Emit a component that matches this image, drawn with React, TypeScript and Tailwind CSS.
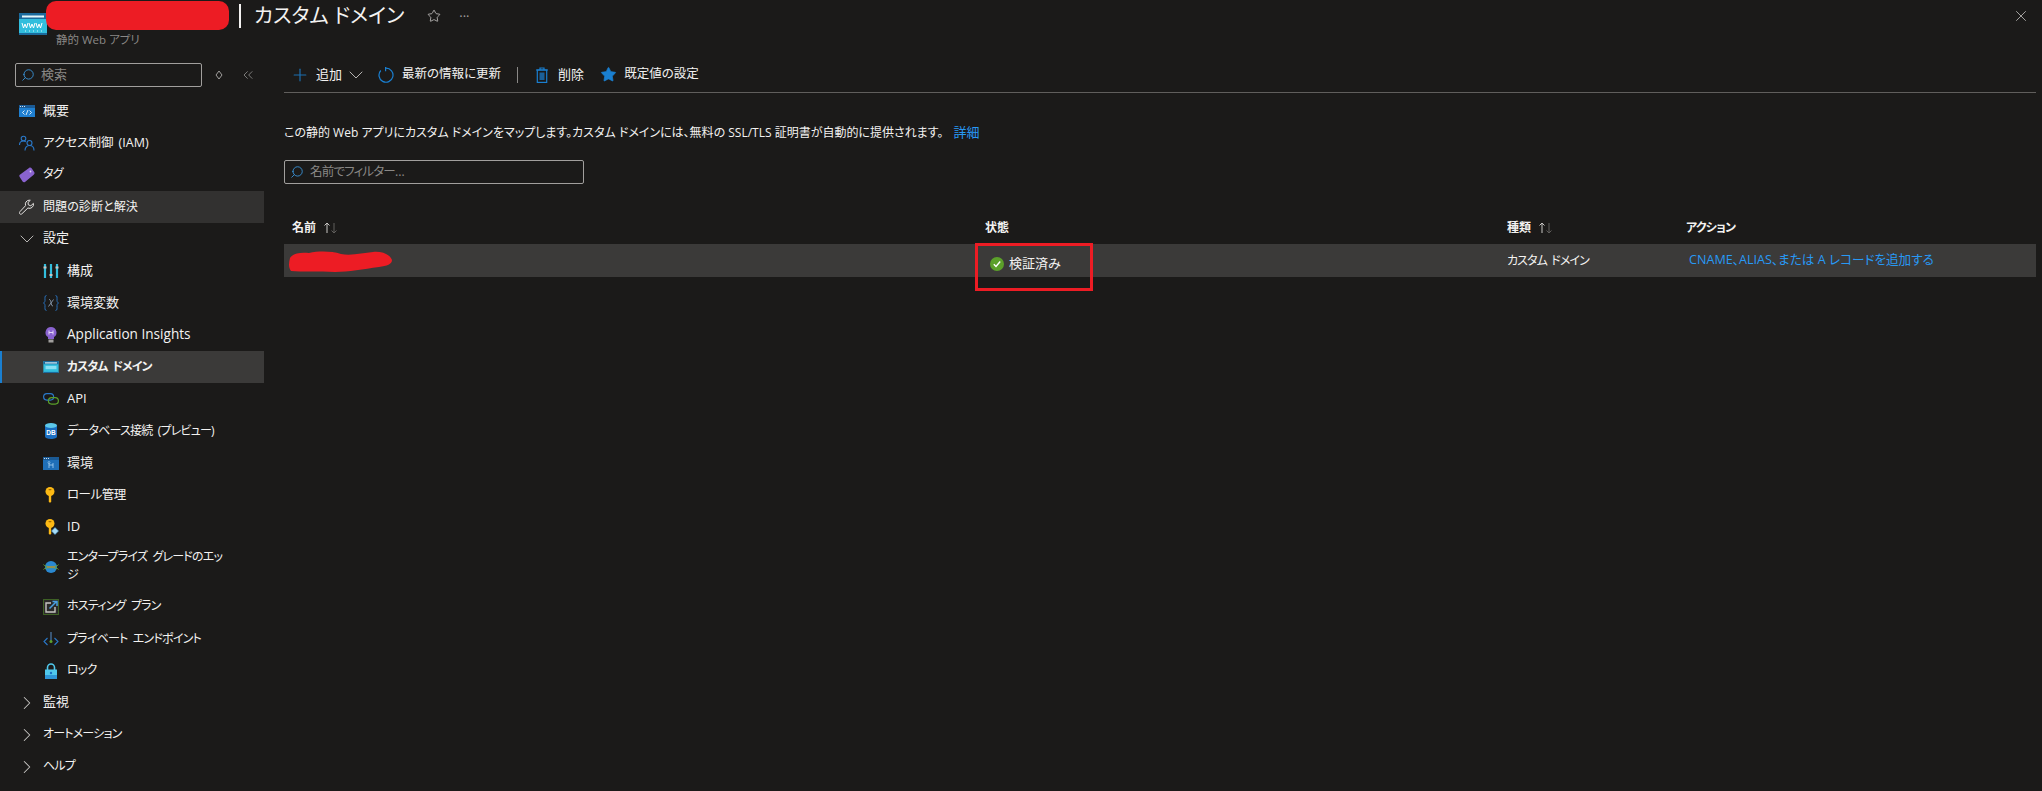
import { ReactNode } from "react";
import { ChevronDown, ChevronRight, ChevronsLeft, Plus, Search, Star, X } from "lucide-react";

const fontClass =
  "[font-family:'Open_Sans','Noto_Sans_CJK_JP',sans-serif] [font-feature-settings:'palt']";

// the katakana in the portal runs much narrower than Noto's
const kana = "text-[12px] tracking-[-0.8px] [word-spacing:3px]";

const WwwIcon = ({ small }: { small?: boolean }) => (
  <svg viewBox="0 0 28 22" className={small ? "w-4 h-3" : "w-7 h-[22px]"}>
    <rect width="28" height="22" fill="#32bedd" />
    <rect width="28" height="6" fill="#1b6a9c" />
    <rect x="3" y="2.500" width="22" height="2" fill="#e6f6fb" />
    <rect y="20" width="28" height="2" fill="#1b6a9c" />
    {!small && (
      <>
        <path d="M3 10l1.500 5 1.500-4 1.500 4 1.500-5M10 10l1.500 5 1.500-4 1.500 4 1.500-5M17 10l1.500 5 1.500-4 1.500 4 1.500-5" fill="none" stroke="#fff" strokeWidth="1" />
        <path d="M6 18h1M10 18h1M14 18h1M18 18h1M22 18h1" stroke="#d8f4fa" strokeWidth="1" />
      </>
    )}
    {small && <rect x="4" y="9" width="20" height="6" fill="#8be0f2" />}
  </svg>
);

const OverviewIcon = () => (
  <svg viewBox="0 0 16 12" className="w-4 h-3">
    <rect width="16" height="12" fill="#1f7fd0" />
    <rect width="16" height="3" fill="#1b5a94" />
    <path d="M1 1.500h1M3 1.500h1M5 1.500h1" stroke="#fff" strokeWidth="0.800" />
    <path d="M5.500 5.500L3.500 7.500l2 2M10.500 5.500l2 2-2 2M9 5l-2 5" fill="none" stroke="#fff" strokeWidth="0.800" />
  </svg>
);

const PeopleIcon = () => (
  <svg viewBox="0 0 16 16" className="w-4 h-4" fill="none" stroke="#2a78c8" strokeWidth="1.100">
    <circle cx="4.500" cy="3.500" r="2.300" />
    <path d="M0.500 10c0-2.500 1.500-4 4-4 1 0 1.600.2 2.300.7" />
    <circle cx="10.500" cy="8" r="2.500" />
    <path d="M6 15.500c0-3 1.800-5 4.500-5s4.500 2 4.500 5" />
  </svg>
);

const TagIcon = () => (
  <svg viewBox="0 0 16 16" className="w-4 h-4">
    <path d="M0.500 8L10 1c1-.7 2-.5 2.600.3l2.600 3.800c.6.900.4 2-.5 2.600L6 15c-1 .5-1.800.3-2.400-.4L0.700 10c-.5-.7-.5-1.400-.2-2z" fill="#8a63cf" />
    <circle cx="11.500" cy="4.500" r="0.900" fill="#e3d8f6" />
  </svg>
);

const WrenchIcon = () => (
  <svg viewBox="0 0 16 16" className="w-4 h-4" fill="none" stroke="#e6e4e2" strokeWidth="1">
    <path d="M10 1.200a4 4 0 0 0-3.400 5.400L1 12.600c-.8.800-.8 1.600-.2 2.200s1.500.6 2.200-.1L8.900 9a4 4 0 0 0 5.500-4.600L11.800 6.800 9.300 5.800 9 3.500 11.300 1.300A4 4 0 0 0 10 1.200z" />
  </svg>
);

const SlidersIcon = () => (
  <svg viewBox="0 0 16 16" className="w-4 h-4">
    <path d="M2 1v14M8 1v14M14 1v14" stroke="#32bedd" strokeWidth="2.200" />
    <rect x="0.500" y="3.500" width="3" height="2" fill="#c8c6c4" />
    <rect x="6.500" y="11" width="3" height="2" fill="#c8c6c4" />
    <rect x="12.500" y="3.500" width="3" height="2" fill="#c8c6c4" />
  </svg>
);

const VariableIcon = () => (
  <svg viewBox="0 0 16 16" className="w-4 h-4" fill="none" stroke="#2a78c8" strokeWidth="0.900">
    <path d="M3.500 0.500C1.500 0.500 2 3 2 5.500c0 1.500-1 2.500-1.500 2.500C1 8 2 9 2 10.500c0 2.500-.5 5 1.500 5M12.500 0.500c2 0 1.500 2.500 1.500 5 0 1.500 1 2.500 1.500 2.500-.5 0-1.500 1-1.500 2.500 0 2.500.5 5-1.500 5" />
    <path d="M6 4.500c1.500 0 1.500 1 2 3s.5 3.500 2 3.500M10.500 4.500L5.500 11.500" stroke="#8a9bb0" />
  </svg>
);

const BulbIcon = () => (
  <svg viewBox="0 0 16 16" className="w-4 h-4">
    <path d="M8 0a5.500 5.500 0 0 0-3 10.100V12h6v-1.900A5.500 5.500 0 0 0 8 0z" fill="#8a63cf" />
    <rect x="5.500" y="12.500" width="5" height="3" fill="#a19f9d" />
    <path d="M6 3.500v4M10 3.500v4M6 5.500h4" stroke="#e3d8f6" strokeWidth="1" />
  </svg>
);

const LinkIcon = () => (
  <svg viewBox="0 0 16 12" className="w-4 h-3" fill="none" strokeWidth="1.200">
    <rect x="0.600" y="0.600" width="10" height="6.500" rx="3.250" stroke="#2a78c8" />
    <rect x="5.400" y="4.600" width="10" height="6.500" rx="3.250" stroke="#5ba02a" />
  </svg>
);

const DbIcon = () => (
  <svg viewBox="0 0 16 16" className="w-4 h-4">
    <path d="M2 2.500v11c0 1.500 2.500 2.500 6 2.500s6-1 6-2.500v-11z" fill="#1b6ec2" />
    <ellipse cx="8" cy="2.500" rx="6" ry="2.500" fill="#5cc8ea" />
    <text x="8" y="12" textAnchor="middle" fontSize="6.500" fontWeight="700" fill="#fff" fontFamily="Liberation Sans, sans-serif">DB</text>
  </svg>
);

const EnvIcon = () => (
  <svg viewBox="0 0 16 13" className="w-4 h-[13px]">
    <rect width="16" height="13" fill="#1f6fb8" />
    <rect width="16" height="3" fill="#1b5a94" />
    <path d="M1 1.500h1M3 1.500h1M5 1.500h1" stroke="#fff" strokeWidth="0.800" />
    <path d="M6 6v5M10 6v5M6 8h4" fill="none" stroke="#a7d2f2" strokeWidth="0.800" />
    <circle cx="6" cy="5.500" r="1" fill="none" stroke="#a7d2f2" strokeWidth="0.600" />
  </svg>
);

const KeyIcon = ({ badge }: { badge?: boolean }) => (
  <svg viewBox="0 0 16 16" className="w-4 h-4">
    <circle cx="7" cy="4.500" r="4.500" fill="#fcb914" />
    <path d="M5.800 7h2.400v7.500L7 16l-1.200-1.500z" fill="#fcb914" />
    <rect x="5.500" y="2" width="3" height="1.200" rx="0.600" fill="#a36c00" />
    {badge && <path d="M12 8.500l3.500 3.500-3.500 3.500L8.500 12z" fill="#a8dcf5" stroke="#3f9ad6" strokeWidth="0.600" />}
  </svg>
);

const GlobeIcon = () => (
  <svg viewBox="0 0 16 14" className="w-4 h-[14px]">
    <circle cx="8" cy="7" r="6" fill="#2a88d0" />
    <path d="M0.500 4.500c1 3 14 3 15 0M0.500 9.500c1-2.500 14-2.500 15 0" fill="none" stroke="#6fa82c" strokeWidth="0.900" />
    <path d="M4 7h8" stroke="#b8894a" strokeWidth="1.200" />
  </svg>
);

const HostingIcon = () => (
  <svg viewBox="0 0 16 16" className="w-4 h-4">
    <rect x="0.500" y="0.500" width="15" height="15" fill="#2b2a29" stroke="#5ba02a" strokeWidth="1" strokeDasharray="1 1" />
    <path d="M8 4H3v9h9V8" fill="none" stroke="#c8c6c4" strokeWidth="1.400" />
    <path d="M6.500 9.500L13 3M9.500 2.500H14v4.500" fill="none" stroke="#4a9fe0" strokeWidth="1.500" />
  </svg>
);

const EndpointIcon = () => (
  <svg viewBox="0 0 16 16" className="w-4 h-4" fill="none">
    <path d="M4.500 7L1 10.500 4.500 14M11.500 7L15 10.500 11.500 14" stroke="#2a78c8" strokeWidth="1.100" />
    <path d="M8 1v9" stroke="#4f7eb0" strokeWidth="1.200" />
    <circle cx="8" cy="10.500" r="1.500" fill="#5ba02a" />
  </svg>
);

const LockIcon = () => (
  <svg viewBox="0 0 16 16" className="w-4 h-4">
    <path d="M4.500 7V4.500a3.500 3.500 0 0 1 7 0V7" fill="none" stroke="#50c8ec" strokeWidth="1.600" />
    <rect x="2" y="6.500" width="12" height="9.500" fill="#50c8ec" />
    <rect x="2" y="12" width="12" height="4" fill="#2f96d8" />
    <circle cx="8" cy="10" r="1.200" fill="#1b6ec2" />
  </svg>
);

const DiamondIcon = () => (
  <svg viewBox="0 0 8 10" className="w-2 h-2.5" fill="none" stroke="#a19f9d" strokeWidth="1">
    <path d="M4 1l3 4-3 4-3-4z" />
  </svg>
);

const TrashIcon = () => (
  <svg viewBox="0 0 12 16" className="w-3 h-4" fill="none" stroke="#1a7fd0" strokeWidth="1.200">
    <path d="M0 3h12M4 3V1h4v2" />
    <rect x="1.300" y="3" width="9.400" height="12.400" />
    <rect x="3.500" y="5.500" width="5" height="7.500" fill="#1a7fd0" fillOpacity="0.700" stroke="none" />
  </svg>
);

const RefreshIcon = () => (
  <svg viewBox="0 0 16 16" className="w-4 h-4" fill="none" stroke="#1a7fd0" strokeWidth="1.200">
    <path d="M8 1.200a7 7 0 1 1-5.200 2.300" />
    <path d="M7.600 0v4.200" />
  </svg>
);

const SortIcon = () => (
  <svg viewBox="0 0 16 12" className="w-4 h-3" fill="none" strokeWidth="1">
    <path d="M4 11V1M1.500 3.500L4 1l2.500 2.500" stroke="#c8c6c4" />
    <path d="M11 1v10M8.500 8.500L11 11l2.500-2.500" stroke="#605e5c" />
  </svg>
);

const RowBlob = () => (
  <svg viewBox="0 0 103 21" className="w-[103px] h-[21px]">
    <path
      d="M1 7C4 2 12 1 20 2C30 0 42 0 52 3C62 5 74 2 84 1C92 0 101 3 103 9C103 13 98 15 90 16C74 18 60 21 46 21C30 20 12 21 2 20C-1 16 0 11 1 7Z"
      fill="#ed1c24"
    />
  </svg>
);

const NavRow = ({
  icon,
  label,
  level = 1,
  active,
  hover,
  tall,
  labelClass = "text-[13px]",
}: {
  icon: ReactNode;
  label: string;
  level?: number;
  active?: boolean;
  hover?: boolean;
  tall?: boolean;
  labelClass?: string;
}) => (
  <div
    className={`flex items-center text-[#f3f2f1] ${tall ? "h-12" : "h-8"} ${
      active ? "pl-[41px] bg-[#3b3a39] border-l-2 border-[#1a7fd0]" : level === 2 ? "pl-[43px]" : "pl-[19px]"
    } ${hover ? "bg-[#323130]" : ""}`}
  >
    <div className="w-4 h-4 shrink-0 flex items-center justify-center">{icon}</div>
    <span className={`ml-2 pb-0.5 leading-[18px] ${level === 2 ? "w-[156px]" : ""} ${labelClass}`}>{label}</span>
  </div>
);

const Group = ({ label, open, labelClass = "text-[13px]" }: { label: string; open?: boolean; labelClass?: string }) => (
  <div className="flex items-center h-8 pl-[19px] text-[#f3f2f1]">
    <div className="w-4 h-4 shrink-0 flex items-center justify-center">
      {open ? (
        <ChevronDown className="w-6 h-6 shrink-0 text-[#c8c6c4]" strokeWidth={0.9} />
      ) : (
        <ChevronRight className="w-[22px] h-[22px] shrink-0 text-[#c8c6c4]" strokeWidth={1.1} />
      )}
    </div>
    <span className={`ml-2 pb-0.5 ${labelClass}`}>{label}</span>
  </div>
);

const Sidebar = () => (
  <aside className="w-[264px] shrink-0">
    <div className="flex items-center h-6 mt-[6px] ml-[15px]">
      <div className="flex items-center w-[187px] h-6 border border-[#a19f9d] rounded-[2px] pl-[5px]">
        <Search className="w-[14px] h-[14px] text-[#3a96dd] -scale-x-100" strokeWidth={1.500} />
        <span className="ml-[6px] text-[13px] text-[#8a8886]">検索</span>
      </div>
      <div className="ml-[13px] w-2 flex justify-center">
        <DiamondIcon />
      </div>
      <ChevronsLeft className="ml-[17px] w-4 h-4 text-[#a19f9d]" strokeWidth={1.100} />
    </div>
    <div className="mt-2">
      <NavRow icon={<OverviewIcon />} label="概要" />
      <NavRow icon={<PeopleIcon />} label="アクセス制御 (IAM)" labelClass="mt-0.5 text-[12.5px] [word-spacing:2px]" />
      <NavRow icon={<TagIcon />} label="タグ" labelClass={kana} />
      <NavRow icon={<WrenchIcon />} label="問題の診断と解決" hover labelClass="mt-0.5 text-[12.1px]" />
      <Group label="設定" open />
      <NavRow level={2} icon={<SlidersIcon />} label="構成" />
      <NavRow level={2} icon={<VariableIcon />} label="環境変数" />
      <NavRow level={2} icon={<BulbIcon />} label="Application Insights" labelClass="text-[13.6px]" />
      <NavRow level={2} icon={<WwwIcon small />} label="カスタム ドメイン" active labelClass="mt-0.5 text-[12px] font-bold tracking-[-1px] [word-spacing:3px]" />
      <NavRow level={2} icon={<LinkIcon />} label="API" />
      <NavRow level={2} icon={<DbIcon />} label="データベース接続 (プレビュー)" labelClass={`mt-0.5 ${kana}`} />
      <NavRow level={2} icon={<EnvIcon />} label="環境" />
      <NavRow level={2} icon={<KeyIcon />} label="ロール管理" labelClass="mt-0.5 text-[12.5px] tracking-[-0.5px]" />
      <NavRow level={2} icon={<KeyIcon badge />} label="ID" />
      <NavRow level={2} icon={<GlobeIcon />} label="エンタープライズ グレードのエッジ" tall labelClass={kana} />
      <NavRow level={2} icon={<HostingIcon />} label="ホスティング プラン" labelClass={kana} />
      <NavRow level={2} icon={<EndpointIcon />} label="プライベート エンドポイント" labelClass={`mt-0.5 ${kana}`} />
      <NavRow level={2} icon={<LockIcon />} label="ロック" labelClass={kana} />
      <Group label="監視" />
      <Group label="オートメーション" labelClass={kana} />
      <Group label="ヘルプ" labelClass={kana} />
    </div>
  </aside>
);

const Toolbar = () => (
  <div className="flex items-center h-9 border-b border-[#605e5c] text-[#f3f2f1]">
    <Plus className="ml-[6px] w-5 h-5 text-[#1c6fb0]" strokeWidth={1.400} />
    <span className="ml-[6px] text-[13px]">追加</span>
    <ChevronDown className="ml-0.5 w-6 h-6 text-[#c8c6c4]" strokeWidth={0.9} />
    <div className="ml-2.5 flex">
      <RefreshIcon />
    </div>
    <span className="ml-2 text-[12.5px]">最新の情報に更新</span>
    <div className="ml-4 w-px h-4 bg-[#8a8886]" />
    <div className="ml-[18px] flex">
      <TrashIcon />
    </div>
    <span className="ml-2.5 text-[13px]">削除</span>
    <Star className="ml-4 w-[17px] h-[17px] text-[#1a7fd0] fill-[#1a7fd0]" strokeWidth={1} />
    <span className="ml-[7px] text-[12.5px]">既定値の設定</span>
  </div>
);

const Table = () => (
  <div className="mt-[28px] text-[12px]">
    <div className="grid grid-cols-[693px_522px_179px_1fr] h-8 items-center font-bold text-[#f3f2f1]">
      <div className="flex items-center pl-2">
        名前
        <span className="ml-[7px] flex">
          <SortIcon />
        </span>
      </div>
      <div className="pl-2">状態</div>
      <div className="flex items-center pl-2">
        種類
        <span className="ml-[7px] flex">
          <SortIcon />
        </span>
      </div>
      <div className="pl-2 tracking-[-0.8px]">アクション</div>
    </div>
    <div className="grid grid-cols-[693px_522px_179px_1fr] h-[33px] items-center bg-[#3b3a39] text-[#f3f2f1]">
      <div className="pl-[5px] pt-px flex">
        <RowBlob />
      </div>
      <div className="relative flex items-center pl-[13px] pt-[7px] h-full">
        <svg viewBox="0 0 14 14" className="w-[14px] h-[14px]">
          <circle cx="7" cy="7" r="7" fill="#5ba02a" />
          <path d="M3.800 7.200l2.200 2.300 4.200-5" fill="none" stroke="#fff" strokeWidth="1.400" />
        </svg>
        <span className="ml-[5px] text-[13px]">検証済み</span>
        <div className="absolute left-[-2px] top-[-1px] w-[118px] h-[48px] border-[3px] border-[#ed1c24]" />
      </div>
      <div className="pl-2 tracking-[-0.9px] [word-spacing:2px]">カスタム ドメイン</div>
      <div className="pl-[11px] text-[12.6px] text-[#2899f5]">CNAME、ALIAS、または A レコードを追加する</div>
    </div>
  </div>
);

export default function App() {
  return (
    <div className={`h-[791px] w-[2042px] overflow-hidden bg-[#1b1a19] ${fontClass}`}>
      <header className="flex h-[57px] relative">
        <div className="mt-[13px] ml-[19px]">
          <WwwIcon />
        </div>
        <div className="ml-[-1px] mt-px">
          <div className="flex items-center h-[29px]">
            <div className="w-[183px] h-[29px] rounded-[10px] bg-[#ed1c24]" />
            <div className="ml-[10px] w-[2px] h-[24px] bg-[#f3f2f1]" />
            <h1 className="ml-[13px] text-[20.5px] font-normal text-[#f3f2f1]">カスタム ドメイン</h1>
            <Star className="ml-[23px] w-[14px] h-[14px] text-[#d2d0ce]" strokeWidth={1.300} />
            <span className="ml-[18px] mt-0.5 text-[13px] leading-none text-[#a19f9d]">···</span>
          </div>
          <div className="ml-[10px] mt-[1px] text-[11.5px] text-[#8a8886]">静的 Web アプリ</div>
        </div>
        <X className="absolute right-[12px] top-[7px] w-[18px] h-[18px] text-[#d2d0ce]" strokeWidth={1} />
      </header>
      <div className="flex">
        <Sidebar />
        <main className="ml-[20px] w-[1752px]">
          <Toolbar />
          <p className="mt-[29px] h-5 text-[12px] leading-5 text-[#f3f2f1]">
            この静的 Web アプリにカスタム ドメインをマップします。カスタム ドメインには、無料の SSL/TLS 証明書が自動的に提供されます。
            <span className="ml-[10px] text-[13px] text-[#2899f5]">詳細</span>
          </p>
          <div className="mt-[18px] flex items-center w-[300px] h-6 border border-[#a19f9d] rounded-[2px] pl-[5px]">
            <Search className="w-[14px] h-[14px] text-[#3a96dd] -scale-x-100" strokeWidth={1.500} />
            <span className="ml-[6px] text-[12.5px] tracking-[-0.8px] text-[#8a8886]">名前でフィルター…</span>
          </div>
          <Table />
        </main>
      </div>
    </div>
  );
}
